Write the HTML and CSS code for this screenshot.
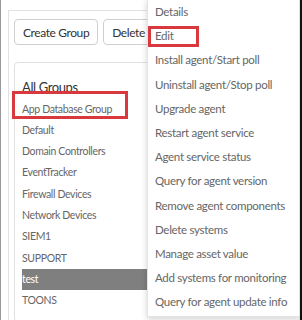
FILE: index.html
```html
<!DOCTYPE html>
<html lang="en">
<head>
    <meta charset="UTF-8">
    <meta name="viewport" content="width=device-width, initial-scale=1.0">
    <title>Manage Groups</title>
    <link rel="stylesheet" href="styles.css">
</head>
<body>
    <div class="screen">
        <div class="panel">
            <div class="toolbar">
                <button class="btn">Create Group</button>
                <button class="btn">Delete Group</button>
            </div>
            <div class="card">
                <div class="card-title">All Groups</div>
                <ul class="groups">
                    <li class="marked">App Database Group</li>
                    <li>Default</li>
                    <li>Domain Controllers</li>
                    <li>EventTracker</li>
                    <li>Firewall Devices</li>
                    <li>Network Devices</li>
                    <li>SIEM1</li>
                    <li>SUPPORT</li>
                    <li class="selected">test</li>
                    <li>TOONS</li>
                </ul>
            </div>
        </div>

        <ul class="menu">
            <li>Details</li>
            <li class="marked">Edit</li>
            <li>Install agent/Start poll</li>
            <li>Uninstall agent/Stop poll</li>
            <li>Upgrade agent</li>
            <li>Restart agent service</li>
            <li>Agent service status</li>
            <li>Query for agent version</li>
            <li>Remove agent components</li>
            <li>Delete systems</li>
            <li>Manage asset value</li>
            <li>Add systems for monitoring</li>
            <li>Query for agent update info</li>
        </ul>
    </div>
</body>
</html>
```

FILE: styles.css
```css
body {
    margin: 0;
    font-family: 'Lato', sans-serif;
    background: #fff;
}
.screen {
    position: relative;
    width: 302px;
    height: 320px;
    box-sizing: border-box;
    border-left: 1px solid #9a9a9a;
    border-right: 2px solid #111;
    overflow: hidden;
}
.panel {
    margin: 10px 0 0 7px;
    height: 310px;
    border-top: 1px solid #e2e2e2;
    border-left: 1px solid #e2e2e2;
    padding: 8px 0 0 5px;
    box-sizing: border-box;
}
.toolbar {
    display: flex;
    gap: 5px;
}
.btn {
    height: 26px;
    padding: 0 8px;
    border: 1px solid #cfcfcf;
    border-radius: 4px;
    background: #fff;
    color: #333;
    font-family: 'Lato', sans-serif;
    font-size: 12px;
    letter-spacing: -0.4px;
    white-space: nowrap;
}
.card {
    margin-top: 17px;
    height: 260px;
    border: 1px solid #e0e0e0;
    border-radius: 4px;
    padding: 14px 0 0 7px;
    box-sizing: border-box;
}
.card-title {
    height: 21.5px;
    line-height: 21.5px;
    font-size: 13px;
    letter-spacing: -0.4px;
    color: #333;
}
.groups {
    list-style-type: none;
    margin: 0;
    padding: 0;
}
.groups li {
    height: 21.3px;
    line-height: 21.3px;
    font-size: 10.5px;
    letter-spacing: -0.35px;
    color: #666;
}
.groups li.selected {
    background-color: #7f7f7f;
    color: #fff;
}
.marked {
    position: relative;
}
.marked::after {
    content: "";
    position: absolute;
    border: 3px solid #d8393e;
}
.groups li.marked::after {
    left: -10px;
    top: -8px;
    width: 110px;
    height: 22px;
}
.menu {
    position: absolute;
    left: 146px;
    top: -1px;
    width: 151px;
    margin: 0;
    padding: 0 0 2px 0;
    list-style-type: none;
    background: #fff;
    border: 1px solid #e4e4e4;
    box-shadow: 0 2px 6px rgba(0, 0, 0, 0.18);
}
.menu li {
    height: 24.2px;
    line-height: 24.2px;
    padding-left: 7px;
    font-size: 11.5px;
    letter-spacing: -0.3px;
    color: #666;
    white-space: nowrap;
}
.menu li.marked::after {
    left: 0;
    top: 2px;
    width: 45px;
    height: 15px;
}
```
